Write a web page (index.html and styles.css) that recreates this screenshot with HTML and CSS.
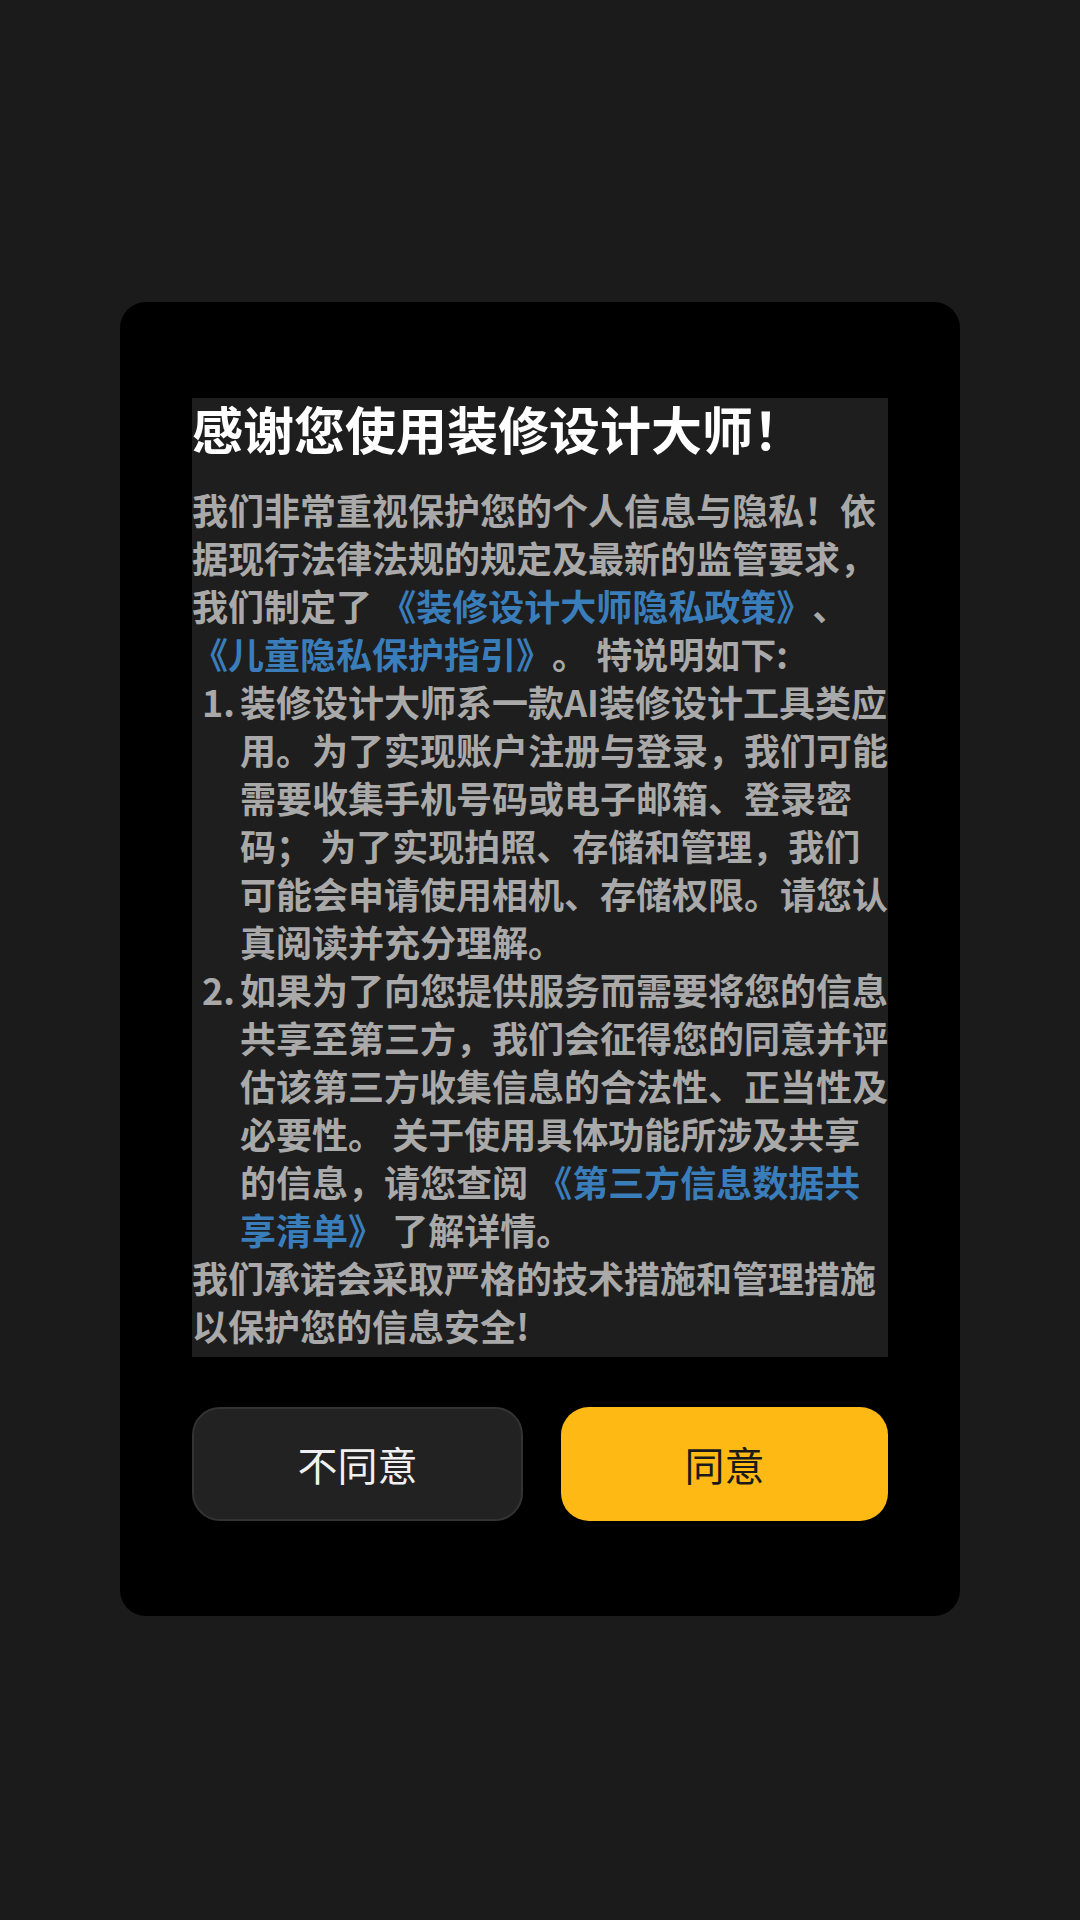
FILE: index.html
```html
<!DOCTYPE html>
<html lang="zh-CN">
<head>
<meta charset="utf-8">
<title>隐私政策</title>
<link rel="stylesheet" href="styles.css">
</head>
<body>
<div class="dialog">
  <div class="content">
    <h1 class="title">感谢您使用装修设计大师！</h1>
    <p class="para">我们非常重视保护您的个人信息与隐私！依据现行法律法规的规定及最新的监管要求，我们制定了 <span class="link">《装修设计大师隐私政策》</span>、<span class="link">《儿童隐私保护指引》</span>。 特说明如下:</p>
    <div class="item">
      <span class="num">1.</span>
      <span class="text">装修设计大师系一款AI装修设计工具类应用。为了实现账户注册与登录，我们可能需要收集手机号码或电子邮箱、登录密码； 为了实现拍照、存储和管理，我们可能会申请使用相机、存储权限。请您认真阅读并充分理解。</span>
    </div>
    <div class="item">
      <span class="num">2.</span>
      <span class="text">如果为了向您提供服务而需要将您的信息共享至第三方，我们会征得您的同意并评估该第三方收集信息的合法性、正当性及必要性。 关于使用具体功能所涉及共享的信息，请您查阅 <span class="link">《第三方信息数据共享清单》</span> 了解详情。</span>
    </div>
    <p class="para">我们承诺会采取严格的技术措施和管理措施以保护您的信息安全!</p>
  </div>
  <div class="actions">
    <button class="btn btn-disagree">不同意</button>
    <button class="btn btn-agree">同意</button>
  </div>
</div>
</body>
</html>
```
FILE: styles.css
```css
html, body {
  margin: 0;
  padding: 0;
}
body {
  width: 1080px;
  height: 1920px;
  background: #1b1b1b;
  font-family: "Noto Sans CJK SC", "Noto Sans", sans-serif;
  overflow: hidden;
  text-spacing-trim: space-all;
}
.dialog {
  box-sizing: border-box;
  width: 840px;
  margin: 302px 0 0 120px;
  padding: 96px 72px 95px;
  background: #000;
  border-radius: 26px;
  display: flex;
  flex-direction: column;
  gap: 50px;
}
.content {
  background: #1e1e1e;
  height: 959px;
  box-sizing: border-box;
  padding-bottom: 8px;
  display: flex;
  flex-direction: column;
}
.title {
  margin: 0 0 27px;
  font-size: 51px;
  line-height: 60px;
  font-weight: 700;
  color: #ffffff;
}
.para {
  margin: 0;
  font-size: 36px;
  line-height: 48px;
  font-weight: 700;
  color: #a9a9a9;
}
.link {
  color: #3a7dbb;
}
.item {
  display: flex;
  font-size: 36px;
  line-height: 48px;
  font-weight: 700;
  color: #a9a9a9;
}
.num {
  flex: 0 0 48px;
  box-sizing: border-box;
  padding-left: 10px;
}
.text {
  flex: 1;
}
.actions {
  display: flex;
  gap: 38px;
}
.btn {
  flex: 1;
  height: 114px;
  border-radius: 28px;
  font-family: "Noto Sans CJK SC", "Noto Sans", sans-serif;
  font-size: 40px;
  font-weight: 400;
  cursor: pointer;
  padding: 0;
}
.btn-disagree {
  background: #222222;
  border: 2px solid #333333;
  color: #f0f0f0;
}
.btn-agree {
  background: #ffb915;
  border: none;
  color: #1a1a1a;
}
```
